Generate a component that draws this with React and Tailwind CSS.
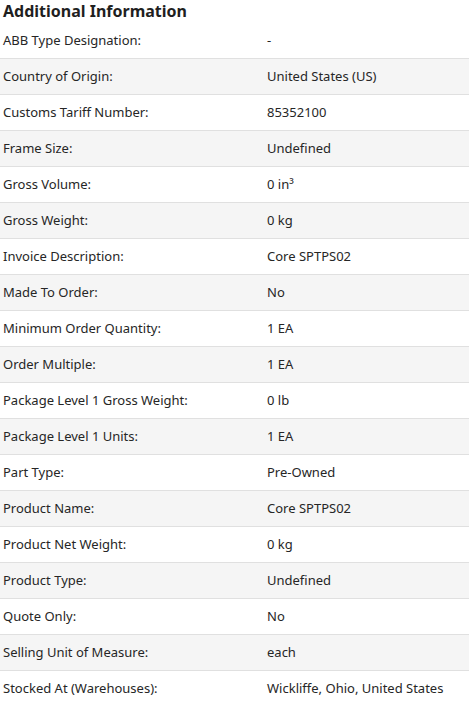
const rows = [
  ['ABB Type Designation:', '-'],
  ['Country of Origin:', 'United States (US)'],
  ['Customs Tariff Number:', '85352100'],
  ['Frame Size:', 'Undefined'],
  ['Gross Volume:', '0 in³'],
  ['Gross Weight:', '0 kg'],
  ['Invoice Description:', 'Core SPTPS02'],
  ['Made To Order:', 'No'],
  ['Minimum Order Quantity:', '1 EA'],
  ['Order Multiple:', '1 EA'],
  ['Package Level 1 Gross Weight:', '0 lb'],
  ['Package Level 1 Units:', '1 EA'],
  ['Part Type:', 'Pre-Owned'],
  ['Product Name:', 'Core SPTPS02'],
  ['Product Net Weight:', '0 kg'],
  ['Product Type:', 'Undefined'],
  ['Quote Only:', 'No'],
  ['Selling Unit of Measure:', 'each'],
  ['Stocked At (Warehouses):', 'Wickliffe, Ohio, United States'],
];

export default function App() {
  return (
    <div className="w-[470px] bg-white font-['Noto_Sans',sans-serif] text-[#262626]">
      <h2 className="h-[23px] pl-[3px] text-[16px] leading-[23px] font-bold text-[#1f1f1f]">
        Additional Information
      </h2>
      <div className="w-[469px]">
        {rows.map(([label, value], i) => (
          <div
            key={label}
            className={`flex h-[36px] items-center border-b border-[#e0e0e0] text-[13px] ${
              i % 2 === 1 ? 'bg-[#f5f5f5]' : 'bg-white'
            }`}
          >
            <div className="w-[267px] pl-[3px]">{label}</div>
            <div className="flex-1">{value}</div>
          </div>
        ))}
      </div>
    </div>
  );
}
